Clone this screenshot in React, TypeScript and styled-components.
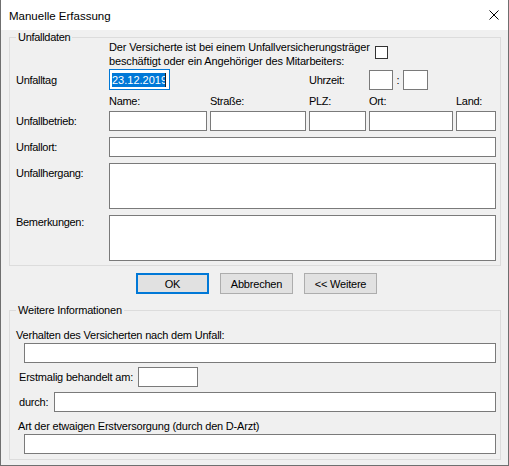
import React from 'react';
import styled, {createGlobalStyle} from 'styled-components';

const GlobalStyle = createGlobalStyle`
  html, body {
    margin: 0;
    padding: 0;
    background: #ffffff;
  }
  * {
    box-sizing: border-box;
  }
`

export default function App() {
    return (
        <>
            <GlobalStyle/>
            <Window>
                <TitleBar>
                    <Title>Manuelle Erfassung</Title>
                    <CloseIcon viewBox="0 0 10 10">
                        <path d="M0.5 0.5 L9.5 9.5 M9.5 0.5 L0.5 9.5" stroke="#000" strokeWidth="1" fill="none"/>
                    </CloseIcon>
                </TitleBar>
                <Body>
                    <Group $pb={4}>
                        <Legend>Unfalldaten</Legend>
                        <Row>
                            <span/>
                            <CheckLine>
                                <CheckText>
                                    Der Versicherte ist bei einem Unfallversicherungsträger<br/>
                                    beschäftigt oder ein Angehöriger des Mitarbeiters:
                                </CheckText>
                                <CheckBox/>
                            </CheckLine>
                        </Row>
                        <Row $mt={1}>
                            <Label>Unfalltag</Label>
                            <DateBox>
                                <Selection>23.12.2019</Selection>
                            </DateBox>
                            <span/>
                            <Label>Uhrzeit:</Label>
                            <TimeGroup>
                                <TextBox $w={24}/>
                                <Colon>:</Colon>
                                <TextBox $w={25}/>
                            </TimeGroup>
                        </Row>
                        <Row $mt={4}>
                            <span/>
                            <Label>Name:</Label>
                            <Label>Straße:</Label>
                            <Label>PLZ:</Label>
                            <Label>Ort:</Label>
                            <Label>Land:</Label>
                        </Row>
                        <Row $mt={3}>
                            <Label>Unfallbetrieb:</Label>
                            <TextBox/>
                            <TextBox/>
                            <TextBox/>
                            <TextBox/>
                            <TextBox/>
                        </Row>
                        <Row $mt={6}>
                            <Label>Unfallort:</Label>
                            <TextBox $span/>
                        </Row>
                        <Row $mt={6} $top>
                            <Label $pt={3}>Unfallhergang:</Label>
                            <TextArea $span/>
                        </Row>
                        <Row $mt={6} $top>
                            <Label $pt={0}>Bemerkungen:</Label>
                            <TextArea $span/>
                        </Row>
                    </Group>

                    <ButtonBar>
                        <Button $primary>OK</Button>
                        <Button>Abbrechen</Button>
                        <Button>&lt;&lt; Weitere</Button>
                    </ButtonBar>

                    <Group $pb={5} $mt={14} $wide>
                        <Legend>Weitere Informationen</Legend>
                        <BlockLabel $mt={15}>Verhalten des Versicherten nach dem Unfall:</BlockLabel>
                        <FieldLine $mt={1} $pl={8}>
                            <TextBox/>
                        </FieldLine>
                        <FieldLine $mt={4} $pl={3}>
                            <Label $w={119}>Erstmalig behandelt am:</Label>
                            <TextBox $w={60}/>
                        </FieldLine>
                        <FieldLine $mt={5} $pl={3}>
                            <Label $w={35}>durch:</Label>
                            <TextBox/>
                        </FieldLine>
                        <BlockLabel $mt={7} $pl={2}>Art der etwaigen Erstversorgung (durch den D-Arzt)</BlockLabel>
                        <FieldLine $mt={1} $pl={8}>
                            <TextBox/>
                        </FieldLine>
                    </Group>
                </Body>
            </Window>
        </>
    )
}

const Window = styled.div`
  width: 509px;
  height: 466px;
  display: flex;
  flex-direction: column;
  border: 1px solid #6f6f6f;
  border-top: none;
  background: #f0f0f0;
  font-family: 'Liberation Sans', Arial, sans-serif;
  font-size: 11px;
  letter-spacing: -0.3px;
  color: #000;
`

const TitleBar = styled.div`
  height: 30px;
  flex: none;
  display: flex;
  align-items: center;
  justify-content: space-between;
  padding: 0 9px 0 8px;
  background: #ffffff;
`

const Title = styled.span`
  font-size: 11.5px;
  letter-spacing: 0;
  padding-top: 1px;
`

const CloseIcon = styled.svg`
  width: 10px;
  height: 10px;
`

const Body = styled.div`
  flex: 1;
  display: flex;
  flex-direction: column;
  padding: 5px 7px 5px 8px;
`

const Group = styled.fieldset<{$pb: number; $mt?: number; $wide?: boolean}>`
  margin: ${p => p.$mt ?? 0}px 0 0 0;
  padding: 0 4px ${p => p.$pb}px 6px;
  border: 1px solid #dcdcdc;
  min-width: 0;
  letter-spacing: ${p => p.$wide ? '-0.2px' : '-0.3px'};
`

const Legend = styled.legend`
  padding: 0 2px;
  line-height: 5px;
  font-size: 11px;
`

const Row = styled.div<{$mt?: number; $top?: boolean}>`
  display: grid;
  grid-template-columns: 90px 98px 96px 57px 84px 40px;
  column-gap: 3px;
  align-items: ${p => p.$top ? 'start' : 'center'};
  margin-top: ${p => p.$mt ?? 0}px;
`

const Label = styled.span<{$pt?: number; $w?: number}>`
  line-height: 14px;
  white-space: nowrap;
  padding-top: ${p => p.$pt ?? 0}px;
  ${p => p.$w ? `width: ${p.$w}px; flex: none;` : ''}
`

const BlockLabel = styled.div<{$mt: number; $pl?: number}>`
  line-height: 14px;
  margin-top: ${p => p.$mt}px;
  padding-left: ${p => p.$pl ?? 0}px;
  white-space: nowrap;
`

const CheckLine = styled.div`
  grid-column: 2 / -1;
  display: flex;
  align-items: flex-start;
`

const CheckText = styled.div`
  width: 266px;
  line-height: 14px;
  letter-spacing: -0.15px;
`

const CheckBox = styled.div`
  width: 13px;
  height: 13px;
  margin-top: 6px;
  border: 1px solid #333333;
  background: #ffffff;
`

const TextBox = styled.input<{$w?: number; $span?: boolean}>`
  height: 20px;
  width: ${p => p.$w ? `${p.$w}px` : '100%'};
  ${p => p.$w ? 'flex: none;' : 'flex: 1;'}
  ${p => p.$span ? 'grid-column: 2 / -1;' : ''}
  margin: 0;
  padding: 0 2px;
  border: 1px solid #7a7a7a;
  background: #ffffff;
  font: inherit;
  outline: none;
`

const TextArea = styled.textarea<{$span?: boolean}>`
  height: 46px;
  width: 100%;
  ${p => p.$span ? 'grid-column: 2 / -1;' : ''}
  margin: 0;
  padding: 1px 2px;
  border: 1px solid #7a7a7a;
  background: #ffffff;
  font: inherit;
  resize: none;
  outline: none;
  display: block;
`

const DateBox = styled.div`
  width: 61px;
  height: 21px;
  display: flex;
  align-items: center;
  padding-left: 2px;
  border: 1px solid #0078d7;
  background: #ffffff;
  overflow: hidden;
`

const Selection = styled.span`
  display: inline-block;
  width: 54px;
  flex: none;
  overflow: hidden;
  white-space: nowrap;
  line-height: 14px;
  letter-spacing: 0;
  background: #0078d7;
  color: #ffffff;
  border-right: 1px solid #1a1a1a;
`

const TimeGroup = styled.div`
  display: flex;
  align-items: center;
`

const Colon = styled.span`
  width: 10px;
  text-align: center;
  line-height: 14px;
`

const ButtonBar = styled.div`
  display: flex;
  gap: 11px;
  padding-left: 127px;
  margin-top: 7px;
`

const Button = styled.button<{$primary?: boolean}>`
  width: 73px;
  height: 21px;
  margin: 0;
  padding: 0;
  background: #e1e1e1;
  border: ${p => p.$primary ? '2px solid #0078d7' : '1px solid #adadad'};
  font-family: 'Liberation Sans', Arial, sans-serif;
  font-size: 11px;
  letter-spacing: -0.2px;
  color: #000;
`

const FieldLine = styled.div<{$mt: number; $pl: number}>`
  display: flex;
  align-items: center;
  margin-top: ${p => p.$mt}px;
  padding-left: ${p => p.$pl}px;
`
